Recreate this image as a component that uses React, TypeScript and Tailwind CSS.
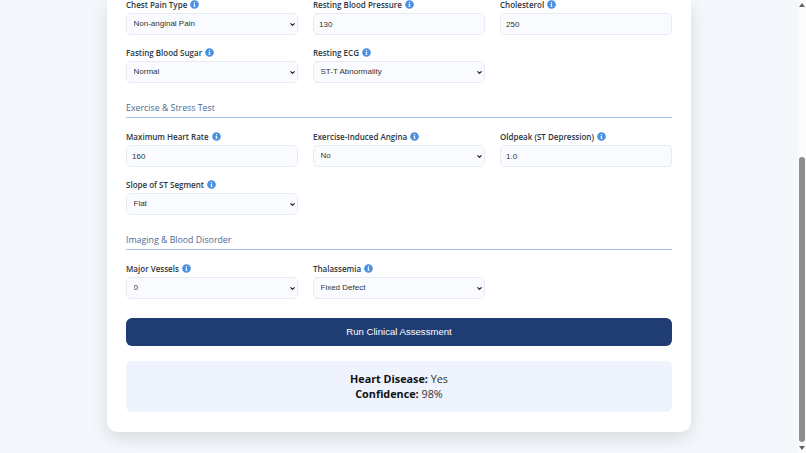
import { FaInfoCircle } from 'react-icons/fa';
import { ChevronDown } from 'lucide-react';

const labelClass = 'flex items-center gap-[3px] h-[9px] mb-[4px] text-[8px] leading-[9px] font-semibold text-[#2d3540]';
const controlClass = 'block w-full h-[22px] rounded-[5px] border-[1.5px] border-[#e6ebf3] bg-[#f9fbfe] text-[8px] text-[#333] outline-none font-["Liberation_Sans",sans-serif]';

function FieldLabel({ text }: { text: string }) {
  return (
    <label className={labelClass}>
      {text}
      <FaInfoCircle className="w-[9px] h-[9px] text-[#4a90e2]" />
    </label>
  );
}

function InputField({ label, value }: { label: string; value: string }) {
  return (
    <div>
      <FieldLabel text={label} />
      <input readOnly value={value} className={`${controlClass} px-[5px]`} />
    </div>
  );
}

function SelectField({ label, value }: { label: string; value: string }) {
  return (
    <div>
      <FieldLabel text={label} />
      <div className="relative">
        <select value={value} onChange={() => {}} className={`${controlClass} appearance-none pl-[6.5px]`}>
          <option>{value}</option>
        </select>
        <ChevronDown strokeWidth={4} className="absolute right-[2px] top-[7.5px] w-[7px] h-[7px] text-[#222] pointer-events-none" />
      </div>
    </div>
  );
}

function SectionTitle({ text }: { text: string }) {
  return (
    <div>
      <h3 className="h-[17px] text-[8.8px] leading-[17px] font-normal text-[#4b6a94]">{text}</h3>
      <div className="h-[1px] bg-[#a4c3e8]" />
    </div>
  );
}

function Scrollbar() {
  return (
    <div className="w-[8px] h-full shrink-0 bg-[#fbfbfb] flex flex-col items-center">
      <div className="h-[157px] w-full flex justify-center pt-[3px]">
        <div className="w-0 h-0 border-x-[3px] border-x-transparent border-b-[4px] border-b-[#606060]" />
      </div>
      <div className="w-[6px] h-[285px] rounded-[3px] bg-[#8c8c8c]" />
      <div className="flex-1 w-full flex justify-center items-end pb-[3px]">
        <div className="w-0 h-0 border-x-[3px] border-x-transparent border-t-[4px] border-t-[#606060]" />
      </div>
    </div>
  );
}

export default function App() {
  return (
    <div className="flex h-[453px] w-[806px] overflow-hidden bg-[#f4f7fb] font-['Open_Sans',sans-serif]">
      <main className="flex-1 min-w-0 pl-[107px] pr-[107px]">
        <div className="w-[584px] h-[432px] rounded-b-[10px] bg-white px-[19px] shadow-[0_6px_18px_rgba(0,0,0,0.12)]">
          <div className="grid grid-cols-3 gap-x-[15px] gap-y-[13px]">
            <SelectField label="Chest Pain Type" value="Non-anginal Pain" />
            <InputField label="Resting Blood Pressure" value="130" />
            <InputField label="Cholesterol" value="250" />
            <SelectField label="Fasting Blood Sugar" value="Normal" />
            <SelectField label="Resting ECG" value="ST-T Abnormality" />
          </div>
          <div className="mt-[17px]">
            <SectionTitle text="Exercise & Stress Test" />
          </div>
          <div className="grid grid-cols-3 gap-x-[15px] gap-y-[13px] mt-[14px]">
            <InputField label="Maximum Heart Rate" value="160" />
            <SelectField label="Exercise-Induced Angina" value="No" />
            <InputField label="Oldpeak (ST Depression)" value="1.0" />
            <SelectField label="Slope of ST Segment" value="Flat" />
          </div>
          <div className="mt-[17px]">
            <SectionTitle text="Imaging & Blood Disorder" />
          </div>
          <div className="grid grid-cols-3 gap-x-[15px] mt-[14px]">
            <SelectField label="Major Vessels" value="0" />
            <SelectField label="Thalassemia" value="Fixed Defect" />
          </div>
          <button className="block mt-[19px] w-full h-[28px] rounded-[6px] bg-[#1f3c73] text-white text-[9.6px] font-['Liberation_Sans',sans-serif]">
            Run Clinical Assessment
          </button>
          <div className="mt-[15px] h-[51px] pb-[2px] rounded-[6px] bg-[#eef3fd] flex flex-col items-center justify-center text-[10.8px] leading-[15px] text-[#333]">
            <div><strong className="font-bold text-[#111]">Heart Disease:</strong> Yes</div>
            <div><strong className="font-bold text-[#111]">Confidence:</strong> 98%</div>
          </div>
        </div>
      </main>
      <Scrollbar />
    </div>
  );
}
